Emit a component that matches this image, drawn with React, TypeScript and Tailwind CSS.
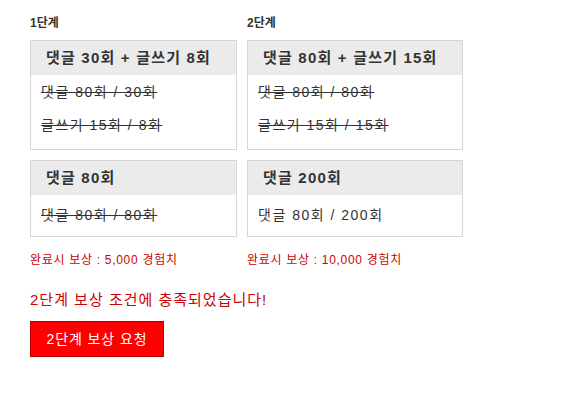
const font = { fontFamily: '"Liberation Sans", "Noto Sans CJK KR", sans-serif' };

type Line = { text: string; done: boolean };
type Card = { title: string; lines: Line[]; bodyPad: string };
type Stage = { label: string; width: string; cards: Card[]; reward: string };

const stages: Stage[] = [
  {
    label: "1단계",
    width: "w-[207px]",
    reward: "완료시 보상 : 5,000 경험치",
    cards: [
      {
        title: "댓글 30회 + 글쓰기 8회",
        bodyPad: "pt-[1px] pb-[7px]",
        lines: [
          { text: "댓글 80회 / 30회", done: true },
          { text: "글쓰기 15회 / 8회", done: true },
        ],
      },
      {
        title: "댓글 80회",
        bodyPad: "py-[4px]",
        lines: [{ text: "댓글 80회 / 80회", done: true }],
      },
    ],
  },
  {
    label: "2단계",
    width: "w-[216px]",
    reward: "완료시 보상 : 10,000 경험치",
    cards: [
      {
        title: "댓글 80회 + 글쓰기 15회",
        bodyPad: "pt-[1px] pb-[7px]",
        lines: [
          { text: "댓글 80회 / 80회", done: true },
          { text: "글쓰기 15회 / 15회", done: true },
        ],
      },
      {
        title: "댓글 200회",
        bodyPad: "py-[4px]",
        lines: [{ text: "댓글 80회 / 200회", done: false }],
      },
    ],
  },
];

function MissionCard({ card }: { card: Card }) {
  return (
    <div className="border border-[#d6d6d6] bg-white">
      <div className="h-[34px] bg-[#ebebeb] px-[15px] flex items-center text-[15px] font-bold text-[#333] tracking-[1.2px] whitespace-nowrap">
        {card.title}
      </div>
      <div className={`px-[10px] ${card.bodyPad}`}>
        {card.lines.map((l) => (
          <div
            key={l.text}
            className={`h-[33px] flex items-center text-[14px] text-[#333] tracking-[1.5px] ${l.done ? "line-through" : ""}`}
          >
            {l.text}
          </div>
        ))}
      </div>
    </div>
  );
}

export default function App() {
  return (
    <div className="min-h-[418px] bg-white pl-[30px] pt-[13px]" style={font}>
      <div className="flex gap-[10px]">
        {stages.map((s) => (
          <div key={s.label} className={s.width}>
            <div className="text-[12px] font-bold text-[#333] h-[20px] leading-[20px] mb-[7px]">{s.label}</div>
            <div className="flex flex-col gap-[10px]">
              {s.cards.map((c) => (
                <MissionCard key={c.title} card={c} />
              ))}
            </div>
            <div className="mt-[15px] text-[12px] text-[#cc0000] leading-[16px] tracking-[0.7px] whitespace-nowrap">
              {s.reward}
            </div>
          </div>
        ))}
      </div>
      <p className="mt-[22px] text-[15px] text-[#cc0000] leading-[20px] tracking-[1px]">
        2단계 보상 조건에 충족되었습니다!
      </p>
      <button className="mt-[11px] h-[36px] w-[134px] bg-[#ff0000] border border-[#b30000] text-white text-[14px] tracking-[0.9px]">
        2단계 보상 요청
      </button>
    </div>
  );
}
